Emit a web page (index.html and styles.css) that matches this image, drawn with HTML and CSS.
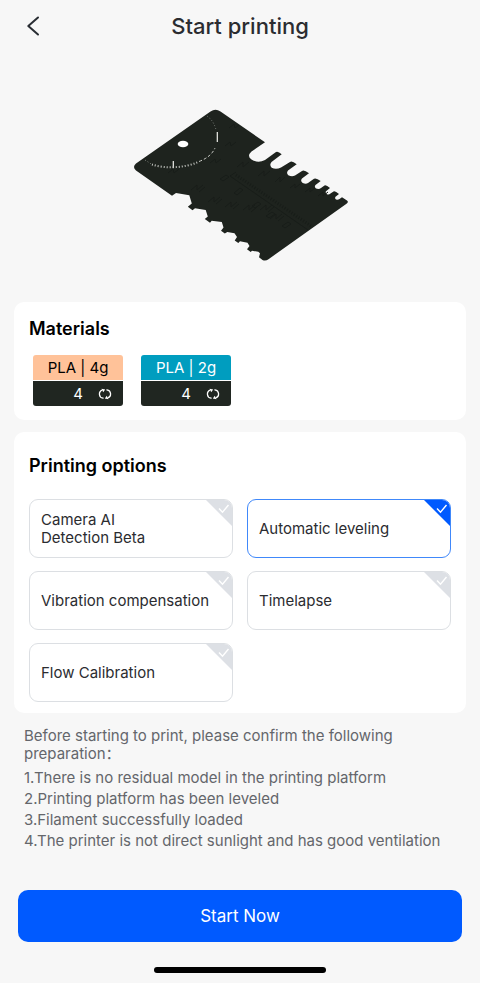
FILE: index.html
```html
<!DOCTYPE html>
<html lang="en">
<head>
<meta charset="utf-8">
<meta name="viewport" content="width=device-width, initial-scale=1">
<title>Start printing</title>
<link rel="stylesheet" href="styles.css">
</head>
<body>
<header class="topbar">
  <button class="back" type="button" aria-label="Back">
    <svg width="14" height="20" viewBox="0 0 14 20"><path d="M12 1.5 2.3 10l9.7 8.5"/></svg>
  </button>
  <h1>Start printing</h1>
</header>
<main>
  <div class="preview">
    <svg width="232" height="170" viewBox="124 100 232 170" role="img" aria-label="Model preview">
      <path class="plate" d="M136 163.500 210.500 111.500Q215.500 108 220.500 111.500L265 142.300 251.500 151.500Q246.500 156 251.500 159.500 258 163.500 265 160L276 152Q278 150.800 281.700 154.300L271.500 162Q269 165 271.700 167.700 276 170 281 167.500L290 162Q292 160.500 296.700 164.300L288 170.500Q286 173 288.300 175.300 292 177 295 175.500L302 171Q304 169.500 309 173.300L302 178.500Q300 181 302.700 183 306 184.500 308 183L314 178.800Q316 177.500 320.700 181L315.500 185Q314 187 316 188.500 319 189.500 321 188L324.500 185.500Q326 184.500 330 188L326 191.200Q325 193 327 194.300 329 195 330.500 193.500L333.500 191.500Q335 190.500 339 194L335.500 196.800Q334.500 198.500 336 199.500 338 200 339.500 199L342 197.200 347 200.500Q349 202 346.500 203.700L268.500 259.200Q265.500 261.500 262.500 260L259 257.300 260 253.300 258.300 251.800 252 250.800 250.700 251.900 247 249.300 249.500 246 247.500 242.700 240 241.300 238.300 243 234.700 240.400 237 237 234.500 233.300 227.300 232 224.800 233.500 221 230.700 223.500 227.500 221.800 222 211.700 220.700 210 222.800 204.800 219 207.800 216.500 205.700 210 195 208.300 192.500 210.200 187.800 206.700 191.800 203.500 189.300 195.200 176 193 172 195.800 136 170.500Q132 167 136 163.500Z"/>
      <g class="engrave">
        <path d="M236 172 230 176 308 230"/>
        <path stroke-dasharray="1 1.800" stroke-width="3" d="M236 175 311 226"/>
        <path d="m191 190 6-5 0 5 6-5m-4 7 6-5m3 15 6-5 0 5 6-5m-4 7 6-5m3 8 6-5 0 5 6-5m-4 7 6-5m4 6 6-5 0 5 6-5m-4 7 6-5m3 3 6-5 0 5 6-5m-4 7 6-5m-4 12 6-5 0 5 6-5m-4 7 6-5"/>
        <path d="m234 193 6-5 3 2-6 5zm-14-14 6-4 3 2-6 4zm32 27 6-4 3 2-6 4zm14 10 6-4 3 2-6 4zm16 10 6-4 3 2-6 4zM237 167l6-5 0 5 6-5m9 14 6-5 0 5 6-5m5 11 5-5 0 5 5-5m5 11 5-4 0 4 5-4m5 8 5-4 0 4 5-4m3 8 5-4 0 4 5-4"/>
        <path d="m168 173 5-4 1 4 5-4m31-6 5-4 1 4 5-4m4-13 5-4 1 4 5-4m-7-14 5-4 1 4 4-3"/>
      </g>
      <ellipse class="hole" cx="183" cy="144" rx="5.300" ry="3.300"/>
      <path class="hole-line" d="M173.300 161v7M217.300 132v10"/>
      <path class="dial faint" d="M207 116Q214 121 216 130"/>
      <path class="dial faint" d="M145 160 152 164.500"/>
      <path class="dial" d="M152 164.500C165 169 185 168 198 162"/>
      <path class="dial solid" d="M199 161.500Q211 157 215 148"/>
    </svg>
  </div>
  <section class="card materials">
    <h2>Materials</h2>
    <div class="spools">
      <div class="spool">
        <div class="filament peach">PLA | 4g</div>
        <button class="slot" type="button" aria-label="Change slot 4 for PLA 4g"><span>4</span>
          <svg width="14" height="12" viewBox="0 0 14 12"><path d="M5.600 10.200H5A4.200 4.200 0 0 1 4.200 2.100M8.400 1.800H9A4.200 4.200 0 0 1 9.800 9.900"/><path class="heads" d="M3.600 .800 7.200 1.500 5.200 4.300ZM10.400 11.200 6.800 10.500 8.800 7.700Z"/></svg>
        </button>
      </div>
      <div class="spool">
        <div class="filament teal">PLA | 2g</div>
        <button class="slot" type="button" aria-label="Change slot 4 for PLA 2g"><span>4</span>
          <svg width="14" height="12" viewBox="0 0 14 12"><path d="M5.600 10.200H5A4.200 4.200 0 0 1 4.200 2.100M8.400 1.800H9A4.200 4.200 0 0 1 9.800 9.900"/><path class="heads" d="M3.600 .800 7.200 1.500 5.200 4.300ZM10.400 11.200 6.800 10.500 8.800 7.700Z"/></svg>
        </button>
      </div>
    </div>
  </section>
  <section class="card printing">
    <h2>Printing options</h2>
    <div class="options">
      <label class="option"><input type="checkbox"><span>Camera AI<br>Detection Beta</span><svg class="corner" width="26" height="26" viewBox="0 0 26 26"><path class="fold" d="M0 0H26V26Z"/><path class="tick" d="m13 8.500 3.500 3.700L22.500 5"/></svg></label>
      <label class="option"><input type="checkbox" checked><span>Automatic leveling</span><svg class="corner" width="26" height="26" viewBox="0 0 26 26"><path class="fold" d="M0 0H26V26Z"/><path class="tick" d="m13 8.500 3.500 3.700L22.500 5"/></svg></label>
      <label class="option"><input type="checkbox"><span>Vibration compensation</span><svg class="corner" width="26" height="26" viewBox="0 0 26 26"><path class="fold" d="M0 0H26V26Z"/><path class="tick" d="m13 8.500 3.500 3.700L22.500 5"/></svg></label>
      <label class="option"><input type="checkbox"><span>Timelapse</span><svg class="corner" width="26" height="26" viewBox="0 0 26 26"><path class="fold" d="M0 0H26V26Z"/><path class="tick" d="m13 8.500 3.500 3.700L22.500 5"/></svg></label>
      <label class="option"><input type="checkbox"><span>Flow Calibration</span><svg class="corner" width="26" height="26" viewBox="0 0 26 26"><path class="fold" d="M0 0H26V26Z"/><path class="tick" d="m13 8.500 3.500 3.700L22.500 5"/></svg></label>
    </div>
  </section>
  <section class="notes">
    <p>Before starting to print, please confirm the following preparation：</p>
    <ul>
      <li>1.There is no residual model in the printing platform</li>
      <li>2.Printing platform has been leveled</li>
      <li>3.Filament successfully loaded</li>
      <li>4.The printer is not direct sunlight and has good ventilation</li>
    </ul>
  </section>
</main>
<footer>
  <button class="start" type="button">Start Now</button>
  <div class="home-bar"></div>
</footer>
</body>
</html>
```
FILE: styles.css
```css
* { box-sizing: border-box; }
body {
  margin: 0;
  min-height: 100vh;
  display: flex;
  flex-direction: column;
  background: #f7f7f7;
  color: #2b2c30;
  font: 15px/18px Inter, "Noto Sans CJK SC", sans-serif;
}
h1, h2, p, ul { margin: 0; padding: 0; }
button { border: 0; padding: 0; font: inherit; cursor: pointer; }
svg { display: block; }

.topbar {
  display: grid;
  grid-template-columns: 40px 1fr 40px;
  align-items: center;
  height: 52px;
  padding: 0 13px;
}
.back { display: flex; justify-content: center; background: none; }
.back svg { fill: none; stroke: #292d33; stroke-width: 2; stroke-linecap: round; stroke-linejoin: round; }
h1 { font-size: 22px; line-height: 28px; font-weight: 500; text-align: center; }

.preview { display: flex; justify-content: center; padding: 48px 0 32px; }
.plate { fill: #1e231e; }
.engrave { fill: none; stroke: #181d19; stroke-width: 1; }
.hole { fill: #fff; }
.hole-line { fill: none; stroke: #f0f0ec; stroke-width: 1.2; }
.dial { fill: none; stroke: #c9cbc6; stroke-width: 2; stroke-dasharray: 1 2; }
.faint { stroke: #7d827c; stroke-width: 1; }
.solid { stroke-width: 1; stroke-dasharray: 3 2; }

.card { margin: 0 14px 12px; padding: 16px 15px 12px; background: #fff; border-radius: 10px; }
h2 { color: #000; font-size: 18px; line-height: 22px; font-weight: 600; }
.materials { padding-bottom: 14px; }
.spools { display: flex; gap: 19px; padding: 15px 4px 0; }
.spool { width: 90px; display: grid; gap: 1px; border-radius: 3px; overflow: hidden; }
.spools { gap: 18px; }
.filament { height: 25px; line-height: 26px; text-align: center; }
.peach { background: #ffc299; color: #000; }
.teal { background: #009dbf; color: #fff; }
.slot {
  display: flex;
  align-items: center;
  justify-content: flex-end;
  gap: 15px;
  height: 25px;
  padding-right: 11px;
  background: #202621;
  color: #fff;
}
.slot svg { overflow: visible; fill: none; stroke: #fff; stroke-width: 1.3; }
.slot .heads { fill: #fff; stroke: none; }

.printing { padding-top: 23px; }
.options { display: grid; grid-template-columns: 1fr 1fr; gap: 13px 14px; margin-top: 22px; }
.printing { padding-bottom: 11px; }
.option {
  position: relative;
  display: flex;
  align-items: center;
  min-height: 59px;
  padding: 0 11px;
  border: 1px solid #dcdfe3;
  border-radius: 9px;
  overflow: hidden;
  cursor: pointer;
}
.option input { position: absolute; inset: 0; margin: 0; opacity: 0; }
.corner { position: absolute; top: 0; right: 0; }
.fold { fill: #dde0e5; }
.tick { fill: none; stroke: #fff; stroke-width: 1.4; }
.option:has(:checked) { border-color: #4088fa; }
.option:has(:checked) .fold { fill: #005aff; }

.notes { padding: 2px 24px 0; color: #64666b; }
.notes ul { margin-top: 4px; list-style: none; line-height: 21px; }

footer { margin-top: auto; padding: 0 18px 10px; }
.start {
  width: 100%;
  height: 52px;
  border-radius: 10px;
  background: #005aff;
  color: #fff;
  font-size: 17px;
}
.home-bar { width: 172px; height: 6px; margin: 25px auto 0; border-radius: 3px; background: #000; }
```
